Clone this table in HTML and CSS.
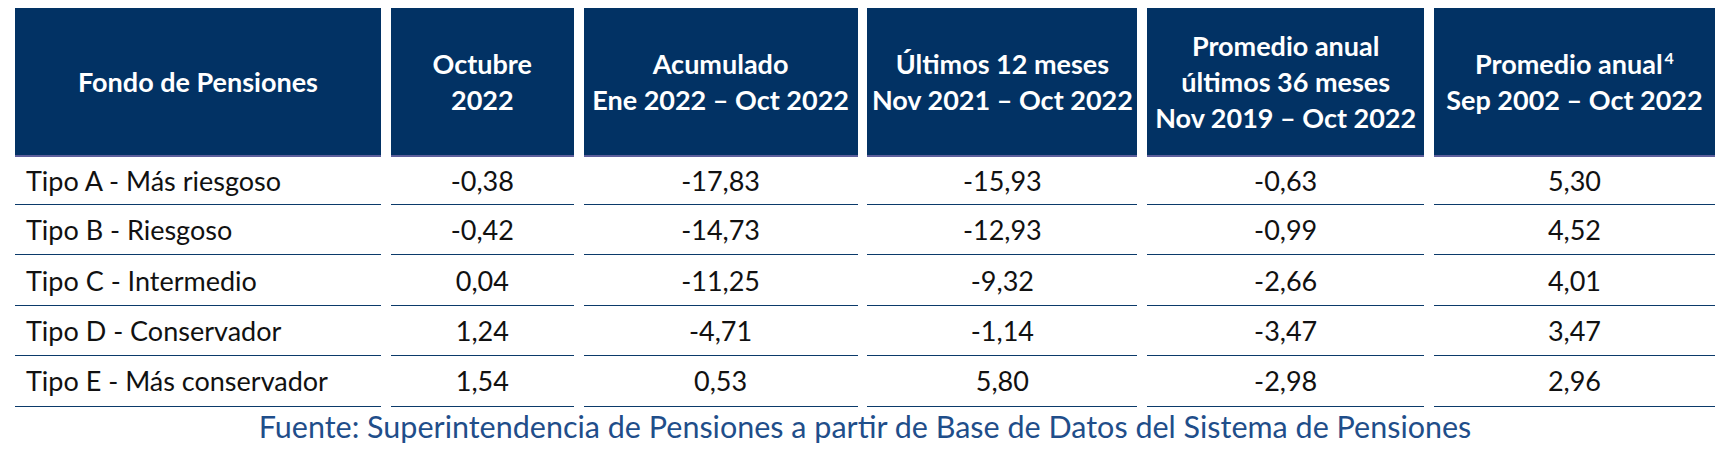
FILE: index.html
```html
<!DOCTYPE html>
<html lang="es">
<head>
<meta charset="utf-8">
<title>Rentabilidad Fondos de Pensiones</title>
<link rel="stylesheet" href="styles.css">
</head>
<body>
<div class="page">
  <div class="grid">
    <div class="hcell"><span>Fondo de Pensiones</span></div>
    <div class="hcell"><span>Octubre<br>2022</span></div>
    <div class="hcell"><span>Acumulado<br>Ene 2022 – Oct 2022</span></div>
    <div class="hcell"><span>Últimos 12 meses<br>Nov 2021 – Oct 2022</span></div>
    <div class="hcell"><span>Promedio anual<br>últimos 36 meses<br>Nov 2019 – Oct 2022</span></div>
    <div class="hcell"><span>Promedio anual<sup>4</sup><br>Sep 2002 – Oct 2022</span></div>

    <div class="cell name">Tipo A - Más riesgoso</div>
    <div class="cell">-0,38</div>
    <div class="cell">-17,83</div>
    <div class="cell">-15,93</div>
    <div class="cell">-0,63</div>
    <div class="cell">5,30</div>

    <div class="cell name">Tipo B - Riesgoso</div>
    <div class="cell">-0,42</div>
    <div class="cell">-14,73</div>
    <div class="cell">-12,93</div>
    <div class="cell">-0,99</div>
    <div class="cell">4,52</div>

    <div class="cell name">Tipo C - Intermedio</div>
    <div class="cell">0,04</div>
    <div class="cell">-11,25</div>
    <div class="cell">-9,32</div>
    <div class="cell">-2,66</div>
    <div class="cell">4,01</div>

    <div class="cell name">Tipo D - Conservador</div>
    <div class="cell">1,24</div>
    <div class="cell">-4,71</div>
    <div class="cell">-1,14</div>
    <div class="cell">-3,47</div>
    <div class="cell">3,47</div>

    <div class="cell name">Tipo E - Más conservador</div>
    <div class="cell">1,54</div>
    <div class="cell">0,53</div>
    <div class="cell">5,80</div>
    <div class="cell">-2,98</div>
    <div class="cell">2,96</div>
  </div>
  <p class="source">Fuente: Superintendencia de Pensiones a partir de Base de Datos del Sistema de Pensiones</p>
</div>
</body>
</html>
```
FILE: styles.css
```css
html, body {
  margin: 0;
  padding: 0;
  background: #ffffff;
}

.page {
  padding: 8px 0 0 15px;
  width: 1700px;
  font-family: "Lato", "Noto Sans", sans-serif;
}

.grid {
  display: grid;
  grid-template-columns: 366px 183px 274px 270px 277px 281px;
  grid-template-rows: 149px 48px repeat(4, 50.4px);
  column-gap: 9.8px;
}

.hcell {
  box-sizing: border-box;
  background: #023264;
  border-bottom: 2px solid #5d5f9c;
  color: #ffffff;
  font-weight: 700;
  font-size: 27px;
  line-height: 36px;
  display: flex;
  align-items: center;
  justify-content: center;
  text-align: center;
  white-space: nowrap;
}

.hcell sup {
  font-size: 16px;
  line-height: 0;
  vertical-align: 0;
  position: relative;
  top: -10px;
  margin-left: 2px;
}

.cell {
  box-sizing: border-box;
  border-bottom: 1.5px solid #0b3a6a;
  color: #111111;
  font-size: 27px;
  display: flex;
  align-items: center;
  justify-content: center;
  white-space: nowrap;
}

.cell.name {
  justify-content: flex-start;
  padding-left: 11px;
}

.source {
  margin: 2px 0 0 0;
  text-align: center;
  font-size: 30.5px;
  line-height: 34px;
  color: #1f4e8a;
  white-space: nowrap;
}
```
